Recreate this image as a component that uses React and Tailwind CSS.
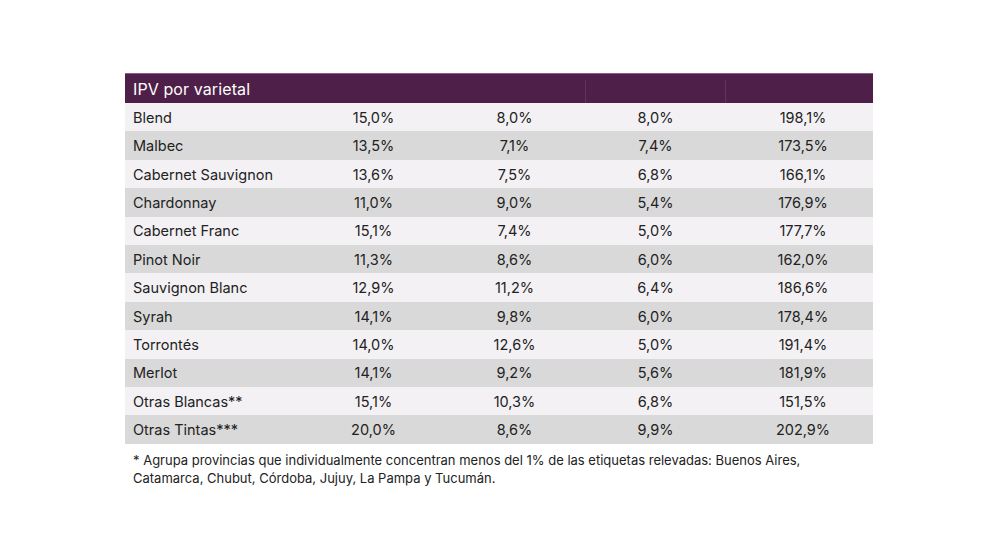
const ROWS = [
  ['Blend', '15,0%', '8,0%', '8,0%', '198,1%'],
  ['Malbec', '13,5%', '7,1%', '7,4%', '173,5%'],
  ['Cabernet Sauvignon', '13,6%', '7,5%', '6,8%', '166,1%'],
  ['Chardonnay', '11,0%', '9,0%', '5,4%', '176,9%'],
  ['Cabernet Franc', '15,1%', '7,4%', '5,0%', '177,7%'],
  ['Pinot Noir', '11,3%', '8,6%', '6,0%', '162,0%'],
  ['Sauvignon Blanc', '12,9%', '11,2%', '6,4%', '186,6%'],
  ['Syrah', '14,1%', '9,8%', '6,0%', '178,4%'],
  ['Torrontés', '14,0%', '12,6%', '5,0%', '191,4%'],
  ['Merlot', '14,1%', '9,2%', '5,6%', '181,9%'],
  ['Otras Blancas**', '15,1%', '10,3%', '6,8%', '151,5%'],
  ['Otras Tintas***', '20,0%', '8,6%', '9,9%', '202,9%'],
]

const COLS = 'grid grid-cols-[178px_141px_141px_141px_147px]'

export default function App() {
  return (
    <div className="w-[992px] h-[558px] bg-white text-[#222] font-['Inter',sans-serif] pt-[73px] pl-[125px]">
      <div className="w-[748px]">
        {/* header */}
        <div className="grid grid-cols-[460px_141px_147px] h-[30px] bg-[#4e2049] border-t border-[#8a5c86] text-white">
          <div className="pl-2 flex items-center text-[16px] tracking-[0.1px]">IPV por varietal</div>
          <div className="border-x border-[#5f3459] mt-[6px]"></div>
          <div></div>
        </div>

        {/* rows */}
        {ROWS.map((r, i) => (
          <div key={r[0]} className={`${COLS} h-[28.4px] pt-[1px] text-[14.5px] ${i % 2 ? 'bg-[#d9d9d9]' : 'bg-[#f3f1f4]'}`}>
            <div className="pl-2 flex items-center">{r[0]}</div>
            <div className="flex items-center justify-center">{r[1]}</div>
            <div className="flex items-center justify-center">{r[2]}</div>
            <div className="flex items-center justify-center">{r[3]}</div>
            <div className="flex items-center justify-center pl-[7px]">{r[4]}</div>
          </div>
        ))}

        <p className="pl-2 pt-[7px] text-[13px] leading-[18px] w-[700px]">
          * Agrupa provincias que individualmente concentran menos del 1% de las etiquetas relevadas: Buenos Aires,
          <br />
          Catamarca, Chubut, Córdoba, Jujuy, La Pampa y Tucumán.
        </p>
      </div>
    </div>
  )
}
